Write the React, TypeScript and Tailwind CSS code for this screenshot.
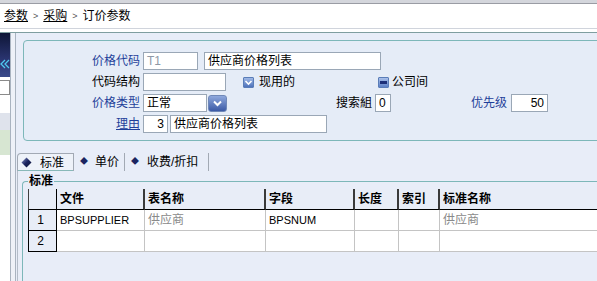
import React from "react";

const F = "font-['Liberation_Sans','Noto_Sans_CJK_SC',sans-serif]";

function CheckOn() {
  return (
    <div className="w-[11px] h-[11px] rounded-[1px] border border-[#5a7db8] bg-[linear-gradient(#9fb8e6,#4f73bb)] flex items-center justify-center">
      <svg width="9" height="9" viewBox="0 0 9 9">
        <path d="M1.5 3 L4.5 6 L7.5 3" stroke="white" strokeWidth="1.6" fill="none" />
      </svg>
    </div>
  );
}

function CheckMixed() {
  return (
    <div className="w-[11px] h-[11px] rounded-[1px] border border-[#5a7db8] bg-[linear-gradient(#a9c0ea,#5d80c6)] flex items-center justify-center">
      <div className="w-[7px] h-[3px] bg-[#1c2f78]" />
    </div>
  );
}

function DropBtn() {
  return (
    <div className="w-[19px] h-[17px] rounded-[3px] border border-[#6f88b8] bg-[linear-gradient(#8ea8dc,#3c5aa6)] flex items-center justify-center">
      <svg width="11" height="9" viewBox="0 0 11 9">
        <path d="M2 2.5 L5.5 6 L9 2.5" stroke="white" strokeWidth="2" fill="none" />
      </svg>
    </div>
  );
}

function Input({
  w,
  children,
  cls = "",
}: {
  w: string;
  children?: React.ReactNode;
  cls?: string;
}) {
  return (
    <div
      className={`${w} h-[18px] border border-[#9aa7b6] bg-white flex items-center px-[3px] leading-none ${cls}`}
    >
      {children}
    </div>
  );
}

export default function App() {
  return (
    <div
      className={`w-[597px] h-[281px] overflow-hidden bg-white text-[12px] text-black ${F}`}
    >
      {/* top strip */}
      <div className="h-[3px] bg-[#d4d6dc]" />
      <div className="h-px bg-[#9a9ca4]" />
      {/* breadcrumb */}
      <div className="h-[24px] flex items-center pl-[4px] leading-none">
        <span className="underline">参数</span>
        <span className="mx-[5px] text-[9px] text-[#555]">&gt;</span>
        <span className="underline">采购</span>
        <span className="mx-[5px] text-[9px] text-[#555]">&gt;</span>
        <span>订价参数</span>
      </div>
      <div className="h-px bg-[#d0d4dc]" />
      <div className="h-[3px] bg-white" />
      <div className="h-px bg-[#7f9ea0]" />

      <div className="flex h-[248px]">
        {/* sidebar */}
        <div className="w-[10px] flex flex-col">
          <div className="h-[44px] bg-[linear-gradient(#0e1636,#2a3470_60%,#3a4a8a)] relative overflow-hidden">
            <svg className="absolute left-0 top-[26px]" width="10" height="10" viewBox="0 0 10 10">
              <path d="M5 1 L1 5 L5 9 M9 1 L5 5 L9 9" stroke="#4fc8f0" strokeWidth="1.3" fill="none" />
            </svg>
          </div>
          <div className="h-[3px] bg-white" />
          <div className="h-[15px] bg-white border border-l-0 border-[#8a8a8a]" />
          <div className="h-[18px] bg-white" />
          <div className="h-[17px] bg-[#dfe3ec]" />
          <div className="h-[25px] bg-[#d7e6d2]" />
          <div className="flex-1 bg-white" />
        </div>
        {/* splitter */}
        <div className="w-[6px] border-l border-r border-[#a9b3c0] bg-[#eef1f8]" />

        {/* content */}
        <div className="flex-1 bg-[#e8edf8] overflow-hidden">
          <div className="pt-[7px] pl-[7px]">
            {/* form panel */}
            <div className="w-[590px] h-[101px] border border-[#7db7b9] rounded-[4px] bg-[#e5ecf7] pt-[11px] flex flex-col gap-[3px]">
              {/* row 1 */}
              <div className="flex items-center h-[18px]">
                <div className="w-[116px] text-right text-[#1f3f9a]">价格代码</div>
                <Input w="w-[55px] ml-[3px]" cls="bg-[#eef1f6] text-[#8e98a6]">
                  T1
                </Input>
                <Input w="w-[177px] ml-[6px]">供应商价格列表</Input>
              </div>
              {/* row 2 */}
              <div className="flex items-center h-[18px]">
                <div className="w-[116px] text-right">代码结构</div>
                <Input w="w-[83px] ml-[3px]" />
                <div className="w-[135px] ml-[17px] flex items-center">
                  <CheckOn />
                  <span className="ml-[5px]">现用的</span>
                </div>
                <div className="flex items-center">
                  <CheckMixed />
                  <span className="ml-[3px]">公司间</span>
                </div>
              </div>
              {/* row 3 */}
              <div className="flex items-center h-[18px]">
                <div className="w-[116px] text-right text-[#1f3f9a]">价格类型</div>
                <Input w="w-[64px] ml-[3px]">正常</Input>
                <div className="ml-[1px]">
                  <DropBtn />
                </div>
                <div className="w-[145px] text-right">搜索組</div>
                <Input w="w-[16px] ml-[3px]" cls="px-[2px]">
                  0
                </Input>
                <div className="w-[116px] text-right text-[#1f3f9a]">优先级</div>
                <Input w="w-[37px] ml-[4px]" cls="justify-end">
                  50
                </Input>
              </div>
              {/* row 4 */}
              <div className="flex items-center h-[18px]">
                <div className="w-[116px] text-right text-[#1f3f9a] underline">理由</div>
                <Input w="w-[25px] ml-[3px]" cls="justify-end">
                  3
                </Input>
                <Input w="w-[157px] ml-[2px]" cls="bg-[#e6ebf3]">
                  供应商价格列表
                </Input>
              </div>
            </div>
          </div>

          {/* tabs */}
          <div className="mt-[12px] ml-[1px] flex h-[18px] items-stretch leading-none">
            <div className="w-[57px] border border-b-0 border-[#a2a9b4] rounded-tl-[4px] bg-[#eef2f9] flex items-center pl-[3px] shadow-[inset_0_-1px_0_#88b8b8]">
              <svg width="11" height="11" viewBox="0 0 11 11">
                <defs>
                  <linearGradient id="dg" x1="0" y1="0" x2="1" y2="1">
                    <stop offset="0" stopColor="#8a96c8" />
                    <stop offset="0.5" stopColor="#1b2460" />
                    <stop offset="1" stopColor="#0b1030" />
                  </linearGradient>
                </defs>
                <path d="M5.5 0.5 L10.5 5.5 L5.5 10.5 L0.5 5.5 Z" fill="url(#dg)" />
              </svg>
              <span className="ml-[8px]">标准</span>
            </div>
            <div className="w-[51px] border-r border-[#a2a9b4] flex items-center pl-[6px]">
              <span className="text-[#1b2460] text-[8px]">◆</span>
              <span className="ml-[7px]">单价</span>
            </div>
            <div className="w-[84px] border-r border-[#a2a9b4] flex items-center pl-[6px]">
              <span className="text-[#1b2460] text-[8px]">◆</span>
              <span className="ml-[8px]">收费/折扣</span>
            </div>
          </div>

          {/* tab pane */}
          <div className="ml-[1px] h-[200px] border-l border-[#b3bcc8] pt-[10px] pl-[4px]">
            <div className="relative h-[200px] border-t border-l border-[#7db7b9] rounded-tl-[4px] pl-[5px] pt-[7px]">
              <div className="absolute left-[5px] top-[-7px] px-px bg-[#e8edf8] font-bold leading-none text-[12px]">
                标准
              </div>
              {/* table */}
              <div className="grid grid-cols-[29px_88px_121px_89px_44px_41px_160px] w-[572px] leading-none">
                <div className="h-[21px] border-l border-[#404040] border-b border-b-black border-r border-r-black bg-[#e8edf7]" />
                {["文件", "表名称", "字段", "长度", "索引", "标准名称"].map((h) => (
                  <div
                    key={h}
                    className="h-[21px] border-b border-black border-r-2 border-r-[#3a3a3a] bg-[#e8edf7] font-bold flex items-center pl-[3px]"
                  >
                    {h}
                  </div>
                ))}

                <div className="h-[21px] border-l border-[#404040] border-b border-black border-r bg-[#e8edf7] flex items-center justify-end pr-[12px]">
                  1
                </div>
                <div className="h-[21px] bg-white border-b border-r border-[#c4c4c4] flex items-center pl-[3px] text-[11px]">
                  BPSUPPLIER
                </div>
                <div className="h-[21px] bg-white border-b border-r border-[#c4c4c4] flex items-center pl-[3px] text-[#8a8a8a]">
                  供应商
                </div>
                <div className="h-[21px] bg-white border-b border-r border-[#c4c4c4] flex items-center pl-[3px] text-[11px]">
                  BPSNUM
                </div>
                <div className="h-[21px] bg-white border-b border-r border-[#c4c4c4]" />
                <div className="h-[21px] bg-white border-b border-r border-[#c4c4c4]" />
                <div className="h-[21px] bg-white border-b border-[#c4c4c4] flex items-center pl-[3px] text-[#8a8a8a]">
                  供应商
                </div>

                <div className="h-[21px] border-l border-[#404040] border-b border-black border-r bg-[#e8edf7] flex items-center justify-end pr-[12px]">
                  2
                </div>
                <div className="h-[21px] bg-white border-b border-r border-[#c4c4c4]" />
                <div className="h-[21px] bg-white border-b border-r border-[#c4c4c4]" />
                <div className="h-[21px] bg-white border-b border-r border-[#c4c4c4]" />
                <div className="h-[21px] bg-white border-b border-r border-[#c4c4c4]" />
                <div className="h-[21px] bg-white border-b border-r border-[#c4c4c4]" />
                <div className="h-[21px] bg-white border-b border-[#c4c4c4]" />
              </div>
            </div>
          </div>
        </div>
      </div>
    </div>
  );
}
